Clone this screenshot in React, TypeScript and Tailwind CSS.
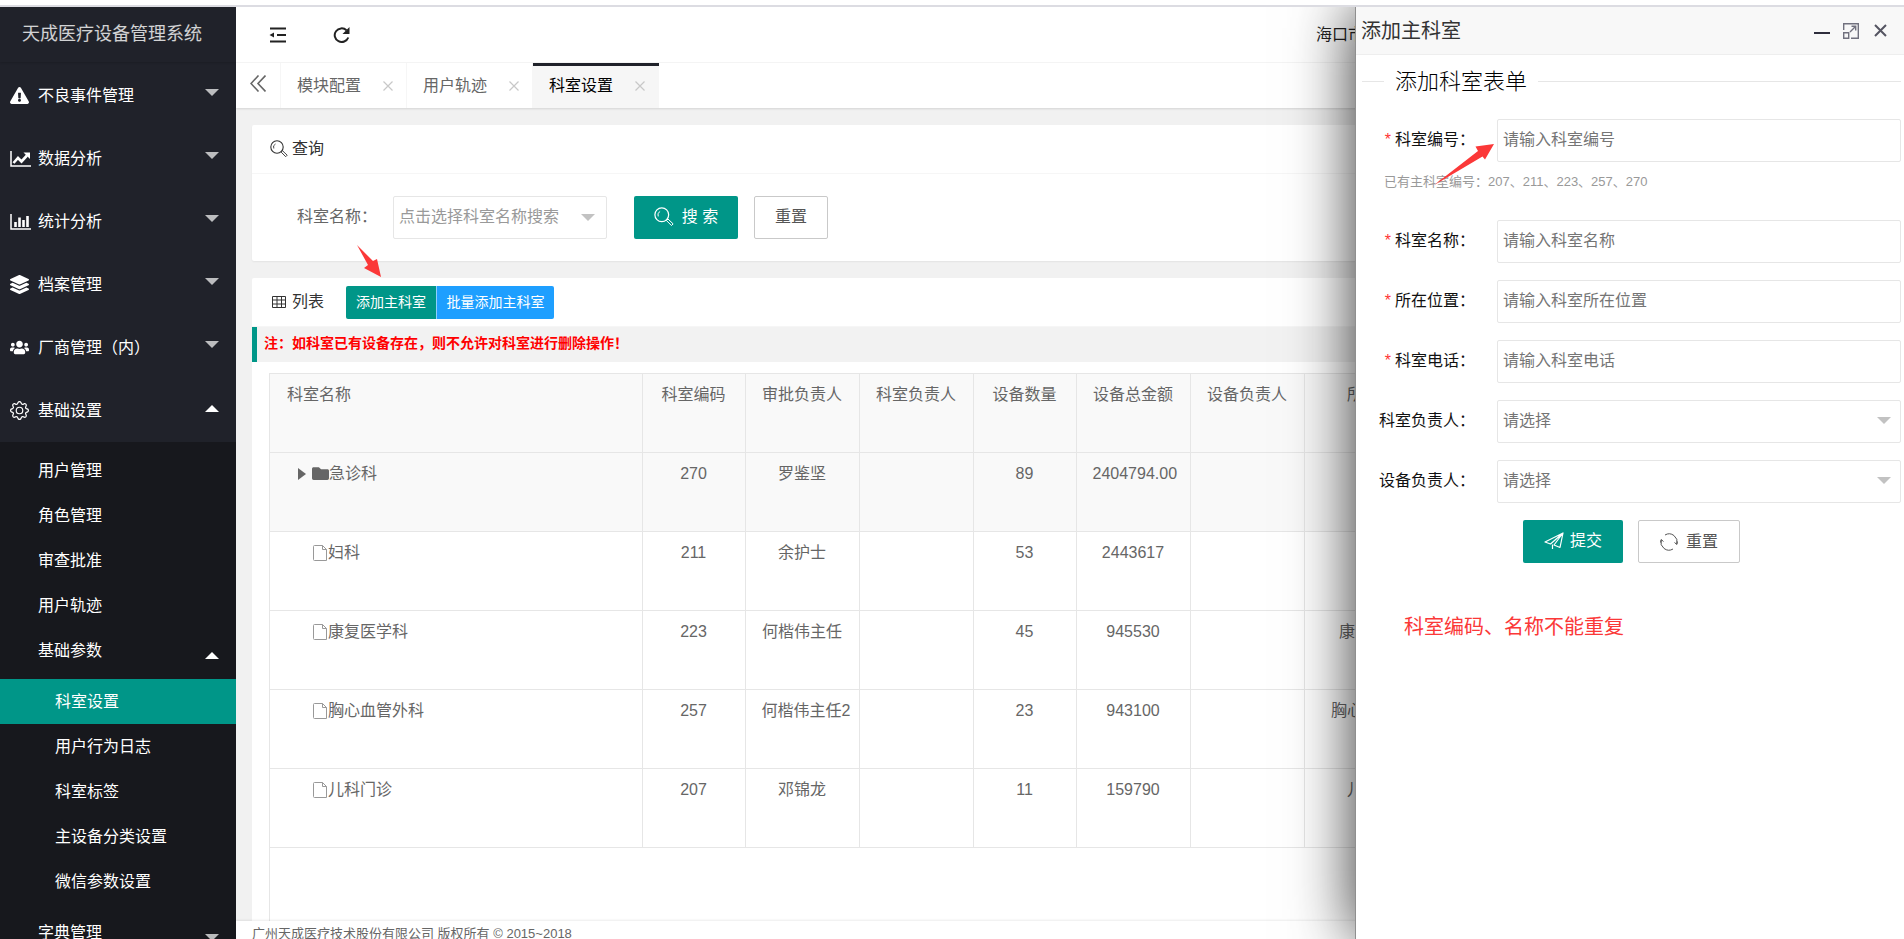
import type { ReactNode } from 'react'
import { BsGear } from 'react-icons/bs'
import { FaExclamationTriangle, FaFolder, FaLayerGroup, FaUsers } from 'react-icons/fa'

function LineChartIcon() {
  return (
    <svg width="21" height="16" viewBox="0 0 21 16" fill="none" stroke="currentColor">
      <path d="M1 0v15h20" strokeWidth="1.5" />
      <path d="M3.5 12l4.5-5 3.5 3.5L17 4.5" strokeWidth="2.6" />
      <path d="M13.5 1.5H20V8z" fill="currentColor" stroke="none" />
    </svg>
  )
}

function BarChartIcon() {
  return (
    <svg width="21" height="16" viewBox="0 0 21 16" fill="none" stroke="currentColor">
      <path d="M1 0v15h20" strokeWidth="1.5" />
      <path d="M5.5 13V8M9.5 13V3.500M13.500 13V6M17.500 13V2" strokeWidth="2.6" />
    </svg>
  )
}

function ShrinkIcon() {
  return (
    <svg width="18" height="16" viewBox="0 0 18 16" fill="none" stroke="currentColor" strokeWidth="2">
      <path d="M1 1.500h16M8 8h9M1 14.500h16" />
      <path d="M0.500 8L5 5.500v5z" fill="currentColor" stroke="none" />
    </svg>
  )
}

function RefreshIcon() {
  return (
    <svg width="18" height="16" viewBox="0 0 18 16" fill="none" stroke="currentColor" strokeWidth="2">
      <path d="M15.300 10.500A7 6.800 0 1 1 13.500 3.200" />
      <path d="M16.500 0v7H9.500z" fill="currentColor" stroke="none" />
    </svg>
  )
}

function SearchIcon({ size = 18 }: { size?: number }) {
  return (
    <svg width={size} height={size} viewBox="0 0 18 18" fill="none" stroke="currentColor">
      <circle cx="7" cy="7" r="6.200" strokeWidth="1.100" />
      <path d="M3.800 8.500A3.500 3.500 0 0 1 5.500 4" strokeWidth="0.900" />
      <path d="M11.200 12.200l1.400-1.400 4.600 4.400-1.500 1.500z" strokeWidth="0.900" />
    </svg>
  )
}

function TableIcon() {
  return (
    <svg width="14" height="12" viewBox="0 0 14 12" fill="none" stroke="currentColor">
      <path d="M.5.500h13v11H.5zM.5 4h13M.5 8h13M5 .500v11M9.500.500v11" />
    </svg>
  )
}

function FileIcon() {
  return (
    <svg width="14" height="16" viewBox="0 0 14 16" fill="none" stroke="#999">
      <path d="M1.500.500h8l4 4v11h-12a1 1 0 0 1-1-1v-13a1 1 0 0 1 1-1z" />
      <path d="M9.500.500v4h4" />
    </svg>
  )
}

function SendIcon() {
  return (
    <svg width="20" height="18" viewBox="0 0 20 18" fill="none" stroke="currentColor" strokeWidth="1.200" strokeLinejoin="round">
      <path d="M19 1L1 10l5.500 2L19 1l-3 14.500-6-2.500L19 1M8.500 12.500V17" />
    </svg>
  )
}

function CycleIcon() {
  return (
    <svg width="18" height="18" viewBox="0 0 18 18" fill="none" stroke="currentColor">
      <path d="M5 2A8 8 0 0 1 16.800 11M13 16A8 8 0 0 1 1.200 7" />
      <path d="M0.500 9.500l.7-3 2.300 2M17.500 8.500l-.7 3-2.300-2" />
    </svg>
  )
}

function Caret({ up = false, className }: { up?: boolean; className: string }) {
  return (
    <svg width="14" height="7" viewBox="0 0 14 7" fill="currentColor" className={className}>
      <path d={up ? 'M0 7L7 0l7 7z' : 'M0 0h14L7 7z'} />
    </svg>
  )
}

const menu: { label: string; icon: ReactNode; open?: boolean }[] = [
  { label: '不良事件管理', icon: <FaExclamationTriangle size={19} /> },
  { label: '数据分析', icon: <LineChartIcon /> },
  { label: '统计分析', icon: <BarChartIcon /> },
  { label: '档案管理', icon: <FaLayerGroup size={19} /> },
  { label: '厂商管理\uFF08内\uFF09', icon: <FaUsers size={19} /> },
  { label: '基础设置', icon: <BsGear size={19} />, open: true },
]

const subMenu = ['用户管理', '角色管理', '审查批准', '用户轨迹']
const paramMenu = ['科室设置', '用户行为日志', '科室标签', '主设备分类设置', '微信参数设置']

function Sidebar() {
  return (
    <aside className="w-[236px] shrink-0 overflow-hidden bg-[#20222a] text-white">
      <h1 className="h-[55px] pl-[22px] text-lg leading-[55px] text-white/80 shadow-[0_1px_2px_rgba(0,0,0,0.15)]">
        天成医疗设备管理系统
      </h1>
      <nav className="pt-[2px]">
        {menu.map((item) => (
          <a key={item.label} href="#" className="flex h-[63px] items-center pr-[17px] pl-[10px]">
            <span className="flex w-7 items-center">{item.icon}</span>
            <span>{item.label}</span>
            <Caret up={item.open} className={item.open ? 'mb-1 ml-auto text-white' : 'mb-[6px] ml-auto text-white/70'} />
          </a>
        ))}
        <div className="bg-[#17181d] pt-[6px]">
          {subMenu.map((label) => (
            <a key={label} href="#" className="block h-[45px] pl-[38px] leading-[45px]">
              {label}
            </a>
          ))}
          <a href="#" className="flex h-[45px] items-center pr-[17px] pl-[38px]">
            基础参数
            <Caret up className="mt-[10px] ml-auto" />
          </a>
          <div className="py-[6px]">
            {paramMenu.map((label, i) => (
              <a
                key={label}
                href="#"
                className={i === 0 ? 'block h-[45px] bg-[#009688] pl-[55px] leading-[45px]' : 'block h-[45px] pl-[55px] leading-[45px]'}
              >
                {label}
              </a>
            ))}
          </div>
          <a href="#" className="flex h-[45px] items-center pr-[17px] pl-[38px]">
            字典管理
            <Caret className="mt-[10px] ml-auto text-white/70" />
          </a>
        </div>
      </nav>
    </aside>
  )
}

const tabs = ['模块配置', '用户轨迹', '科室设置']

function TabBar() {
  return (
    <div className="relative flex h-[45px] shrink-0 bg-white text-[#666] shadow-[0_1px_2px_rgba(0,0,0,0.12)]">
      <button className="flex w-[45px] items-center justify-center border-r border-[#f6f6f6] pb-1" aria-label="向左">
        <svg width="16" height="17" viewBox="0 0 16 17" fill="none" stroke="currentColor" strokeWidth="1.600">
          <path d="M8.500.500l-7.500 8 7.500 8M15.500.500l-7.500 8 7.500 8" />
        </svg>
      </button>
      {tabs.map((tab, i) => (
        <div
          key={tab}
          className={
            i === 2
              ? 'flex w-[126px] items-center border-t-[3px] border-[#20222a] bg-[#f6f6f6] pr-[14px] pb-[3px] pl-4 text-black'
              : 'flex w-[126px] items-center border-r border-[#f6f6f6] pr-[13px] pl-4'
          }
        >
          <a href="#">{tab}</a>
          <button className="ml-auto text-[#c8c8c8]" aria-label="关闭">
            <svg width="10" height="10" viewBox="0 0 10 10" stroke="currentColor" strokeWidth="1.200">
              <path d="M.5.500l9 9M9.500.500l-9 9" />
            </svg>
          </button>
        </div>
      ))}
    </div>
  )
}

function SearchCard() {
  return (
    <section className="rounded-xs bg-white shadow-[0_1px_2px_rgba(0,0,0,0.06)]">
      <h2 className="flex h-[49px] items-center gap-1 border-b border-[#f6f6f6] pb-px pl-[18px] text-[#333]">
        <SearchIcon />
        查询
      </h2>
      <form className="flex h-[87px] items-center pb-px pl-[45px]">
        <label htmlFor="dept" className="w-24 text-[#666]">
          {'科室名称\uFF1A'}
        </label>
        <div className="relative w-[214px]">
          <select
            id="dept"
            className="h-[43px] w-full appearance-none rounded-xs border border-[#e6e6e6] bg-white pl-[5px] text-[#999]"
          >
            <option>点击选择科室名称搜索</option>
          </select>
          <Caret className="pointer-events-none absolute top-[18px] right-3 text-[#c2c2c2]" />
        </div>
        <button type="button" className="ml-[27px] flex h-[43px] w-[104px] items-center justify-center gap-2 rounded-xs bg-[#009688] text-white">
          <SearchIcon size={20} />搜 索
        </button>
        <button type="reset" className="ml-4 h-[43px] w-[74px] rounded-xs border border-[#c9c9c9] bg-white text-[#555]">
          重置
        </button>
      </form>
    </section>
  )
}

const columns = ['科室编码', '审批负责人', '科室负责人', '设备数量', '设备总金额', '设备负责人', '所在位置']

const rows = [
  { name: '急诊科', cells: ['270', '罗鉴坚', '', '89', '2404794.00', '', '急诊科'] },
  { name: '妇科', cells: ['211', '余护士', '', '53', '2443617', '', ''] },
  { name: '康复医学科', cells: ['223', '何楷伟主任', '', '45', '945530', '', '康复医学科'] },
  { name: '胸心血管外科', cells: ['257', '何楷伟主任2', '', '23', '943100', '', '胸心血管外科'] },
  { name: '儿科门诊', cells: ['207', '邓锦龙', '', '11', '159790', '', '儿科门诊'] },
]

function DeptTable() {
  return (
    <table className="w-full table-fixed border-collapse text-[#666]">
      <colgroup>
        <col className="w-[372px]" />
        <col className="w-[103px]" />
        <col className="w-[114px]" />
        <col className="w-[114px]" />
        <col className="w-[103px]" />
        <col className="w-[114px]" />
        <col className="w-[114px]" />
        <col className="w-[150px]" />
        <col />
      </colgroup>
      <thead>
        <tr className="h-[78px] border-b border-[#e6e6e6] bg-[#f9f9f9] align-top">
          <th className="border-r border-[#e6e6e6] px-[17px] py-[9px] text-left font-normal">科室名称</th>
          {columns.map((c) => (
            <th key={c} className="border-r border-[#e6e6e6] px-4 py-[9px] font-normal whitespace-nowrap">
              {c}
            </th>
          ))}
          <th />
        </tr>
      </thead>
      <tbody>
        {rows.map((row, i) => (
          <tr
            key={row.name}
            className={i === 0 ? 'h-[79px] border-b border-[#e6e6e6] bg-[#f9f9f9] align-top' : 'h-[79px] border-b border-[#e6e6e6] align-top'}
          >
            <td className="border-r border-[#e6e6e6] py-[9px]">
              {i === 0 ? (
                <span className="flex items-center pl-7">
                  <svg width="8" height="12" viewBox="0 0 8 12" fill="currentColor" className="mr-[6px]">
                    <path d="M0 0l8 6-8 6z" />
                  </svg>
                  <FaFolder size={17} />
                  {row.name}
                </span>
              ) : (
                <span className="flex items-center gap-px pl-[43px]">
                  <FileIcon />
                  {row.name}
                </span>
              )}
            </td>
            {row.cells.map((cell, j) => (
              <td key={j} className="border-r border-[#e6e6e6] px-4 py-[9px] text-center whitespace-nowrap">
                {cell}
              </td>
            ))}
            <td />
          </tr>
        ))}
      </tbody>
    </table>
  )
}

function ListCard() {
  return (
    <section className="flex min-h-0 flex-1 flex-col rounded-t-xs bg-white">
      <div className="flex h-[49px] shrink-0 items-center border-b border-[#f6f6f6] pl-5 text-[#333]">
        <TableIcon />
        <h2 className="ml-[6px] w-[54px]">列表</h2>
        <button className="h-[33px] w-[90px] rounded-l-xs bg-[#009688] text-sm text-white">添加主科室</button>
        <button className="h-[33px] w-[118px] rounded-r-xs border-l border-white/50 bg-[#1e9fff] text-sm text-white">批量添加主科室</button>
      </div>
      <p className="h-[35px] shrink-0 border-l-[5px] border-[#009688] bg-[#f2f2f2] pl-[7px] text-sm leading-[33px] font-bold text-[#f00]">
        {'注\uFF1A如科室已有设备存在\uFF0C则不允许对科室进行删除操作\uFF01'}
      </p>
      <div className="mx-[17px] mt-[11px] min-h-0 flex-1 overflow-hidden border border-b-0 border-[#e6e6e6]">
        <DeptTable />
      </div>
    </section>
  )
}

function FormRow({ id, label, required = false, children }: { id: string; label: string; required?: boolean; children: ReactNode }) {
  return (
    <div className="flex items-center">
      <label htmlFor={id} className="mr-[22px] w-[113px] shrink-0 pb-[2px] text-right text-[#111]">
        {required && <span className="mr-1 text-[#f33]">*</span>}
        {label}
        {'\uFF1A'}
      </label>
      <div className="relative flex-1">{children}</div>
    </div>
  )
}

function TextField({ id, placeholder }: { id: string; placeholder: string }) {
  return (
    <input
      id={id}
      type="text"
      placeholder={placeholder}
      className="block h-[43px] w-full rounded-xs border border-[#e6e6e6] bg-white pb-[2px] pl-[5px] placeholder:text-[#757575]"
    />
  )
}

function SelectField({ id }: { id: string }) {
  return (
    <>
      <select id={id} className="block h-[43px] w-full appearance-none rounded-xs border border-[#e6e6e6] bg-white pb-[2px] pl-[5px] text-[#757575]">
        <option>请选择</option>
      </select>
      <Caret className="pointer-events-none absolute top-[17px] right-[10px] text-[#c2c2c2]" />
    </>
  )
}

function AddDrawer() {
  return (
    <div
      role="dialog"
      aria-label="添加主科室"
      className="absolute inset-y-0 right-0 w-[549px] border-l border-[#8f8f8f] bg-white shadow-[0_0_60px_rgba(0,0,0,0.8)]"
    >
      <div className="flex h-12 items-center border-b border-[#eee] bg-[#f8f8f8] pr-[17px] pl-[5px] text-[#2e2d3c]">
        <h2 className="text-xl text-[#333]">添加主科室</h2>
        <button className="mr-[13px] ml-auto" aria-label="最小化">
          <svg width="16" height="16" viewBox="0 0 16 16" stroke="currentColor" strokeWidth="2">
            <path d="M0 10h16" />
          </svg>
        </button>
        <button className="mr-[15px]" aria-label="最大化">
          <svg width="16" height="16" viewBox="0 0 16 16" fill="none" stroke="#71717e" strokeWidth="1.400">
            <path d="M.7 7V.700h14.600v14.600H8M.7 9.700h5v5.600h-5zM7 9l5.500-5.500M8.500 3.300h4.200v4.200" />
          </svg>
        </button>
        <button aria-label="关闭">
          <svg width="13" height="13" viewBox="0 0 13 13" stroke="#555562" strokeWidth="2">
            <path d="M1 1l11 11M12 1L1 12" />
          </svg>
        </button>
      </div>
      <form className="pr-[3px] pl-[6px]">
        <div className="flex h-[52px] items-center gap-[11px]">
          <span className="h-px w-[22px] bg-[#e6e6e6]" />
          <h3 className="text-[22px] font-light text-black">添加科室表单</h3>
          <span className="h-px flex-1 bg-[#e6e6e6]" />
        </div>
        <div className="pt-3">
          <FormRow id="code" label="科室编号" required>
            <TextField id="code" placeholder="请输入科室编号" />
          </FormRow>
          <p className="h-[58px] pl-[22px] text-[13px] leading-[40px] text-[#999]">{'已有主科室编号\uFF1A207、211、223、257、270'}</p>
        </div>
        <div className="flex flex-col gap-[17px]">
          <FormRow id="name" label="科室名称" required>
            <TextField id="name" placeholder="请输入科室名称" />
          </FormRow>
          <FormRow id="place" label="所在位置" required>
            <TextField id="place" placeholder="请输入科室所在位置" />
          </FormRow>
          <FormRow id="phone" label="科室电话" required>
            <TextField id="phone" placeholder="请输入科室电话" />
          </FormRow>
          <FormRow id="deptOwner" label="科室负责人">
            <SelectField id="deptOwner" />
          </FormRow>
          <FormRow id="deviceOwner" label="设备负责人">
            <SelectField id="deviceOwner" />
          </FormRow>
          <div className="flex gap-[15px] pl-[161px]">
            <button type="button" className="flex h-[43px] w-[100px] items-center justify-center gap-[6px] rounded-xs bg-[#009688] pb-px text-white">
              <SendIcon />
              提交
            </button>
            <button type="reset" className="flex h-[43px] w-[102px] items-center justify-center gap-2 rounded-xs border border-[#c9c9c9] bg-white text-[#555]">
              <CycleIcon />
              重置
            </button>
          </div>
        </div>
      </form>
      <p className="mt-[50px] pl-12 text-xl text-[#fb3838]">科室编码、名称不能重复</p>
      <svg width="61" height="43" viewBox="0 0 61 43" fill="#fb3838" className="absolute top-[136px] left-[77px]">
        <path d="M0.500 42.500L45 8l-2.500-4.500L61 1l-9 15.500-2.500-3z" />
      </svg>
    </div>
  )
}

export default function App() {
  return (
    <div className="flex h-screen flex-col overflow-hidden bg-white font-['Liberation_Sans','Noto_Sans_CJK_SC',sans-serif] text-base">
      <div className="h-[7px] shrink-0 border-b-2 border-[#dcdce2]" />
      <div className="relative flex min-h-0 flex-1 overflow-hidden">
        <Sidebar />
        <div className="flex min-w-0 flex-1 flex-col bg-[#f1f1f1]">
          <header className="flex h-14 shrink-0 items-center border-b border-[#f6f6f6] bg-white pl-[33px] text-[#222]">
            <button aria-label="收起菜单">
              <ShrinkIcon />
            </button>
            <button className="ml-[46px]" aria-label="刷新">
              <RefreshIcon />
            </button>
            <span className="mr-[540px] ml-auto">海口市</span>
          </header>
          <TabBar />
          <main className="flex min-h-0 flex-1 flex-col gap-[17px] px-4 pt-[17px]">
            <SearchCard />
            <ListCard />
          </main>
          <footer className="relative h-[18px] shrink-0 bg-white pl-4 text-[13px] leading-[26px] text-[#666] shadow-[0_-1px_2px_rgba(0,0,0,0.08)]">
            广州天成医疗技术股份有限公司 版权所有 © 2015~2018
          </footer>
        </div>
        <AddDrawer />
        <svg width="24" height="32" viewBox="0 0 24 32" fill="#fb3838" className="absolute top-[238px] left-[357px]">
          <path d="M0 0l16 16 4-2 4 18-17-9 4-3z" />
        </svg>
      </div>
    </div>
  )
}
